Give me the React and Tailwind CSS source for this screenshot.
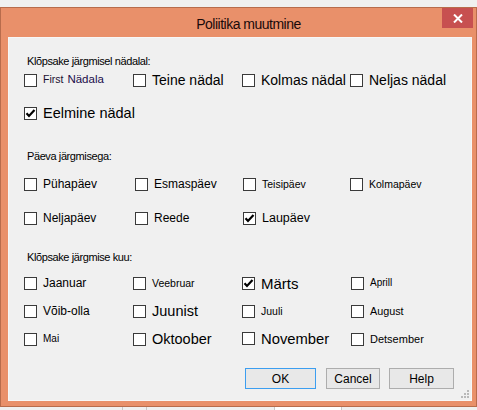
import React from "react";

const font = "font-['Liberation_Sans',Arial,sans-serif]";

function Box({ checked }) {
  return (
    <span className="w-[13px] h-[13px] shrink-0 border border-[#3a3a3a] bg-white flex items-center justify-center">
      {checked && (
        <svg width="11" height="11" viewBox="0 0 11 11">
          <path d="M1.5 5.3 L4 8 L9.5 2" fill="none" stroke="#000" strokeWidth="2.2" />
        </svg>
      )}
    </span>
  );
}

function Check({ label, size, checked, children }) {
  return (
    <div className="flex items-center gap-[6px] whitespace-nowrap">
      <Box checked={checked} />
      {children || <span className={`${size} text-black leading-none`}>{label}</span>}
    </div>
  );
}

function Heading({ children }) {
  return (
    <div className="h-[16px] flex items-center ml-[3px] text-[11px] tracking-[-0.4px] text-black">
      {children}
    </div>
  );
}

export default function App() {
  return (
    <div className={`${font} w-[477px] h-[410px] bg-[#f0f0f0] overflow-hidden`}>
      <div className="h-[7px]" />
      <div className="h-[400px] border border-[#b86c4c] bg-[#e9906a] flex flex-col">
        {/* title bar */}
        <div className="h-[29px] flex items-start relative">
          <div className="flex-1 pl-[20px] pt-[9px] text-center text-[14px] tracking-[-0.5px] text-[#1a0a0a] leading-none">
            Poliitika muutmine
          </div>
          <div className="absolute right-[3px] top-0 w-[31px] h-[20px] bg-[#c75050] flex items-center justify-center">
            <svg width="10" height="9" viewBox="0 0 10 9">
              <path d="M1 0.5 L9 8.5 M9 0.5 L1 8.5" stroke="#fff" strokeWidth="2" />
            </svg>
          </div>
        </div>
        {/* client */}
        <div className="ml-[7px] w-[464px] h-[364px] border border-[#f7f7f7] bg-[#f0f0f0] pl-[15px] pt-[15px] relative flex flex-col">
          <Heading>Klõpsake järgmisel nädalal:</Heading>
          <div className="mt-[1px] h-[20px] grid grid-cols-[109px_109px_109px_1fr] items-center">
            <Check>
              <span className="flex items-baseline gap-[4px] leading-none">
                <span className="text-[10.5px] text-[#1a1030]">First</span>
                <span className="text-[11.5px] text-[#1a0a4a]">Nädala</span>
              </span>
            </Check>
            <Check label="Teine nädal" size="text-[14px]" />
            <Check label="Kolmas nädal" size="text-[14px]" />
            <div className="-ml-[1px]">
              <Check label="Neljas nädal" size="text-[14px]" />
            </div>
          </div>
          <div className="mt-[13px] h-[20px] flex items-center">
            <Check label="Eelmine nädal" size="text-[14.5px]" checked />
          </div>

          <div className="mt-[25px]">
            <Heading>Päeva järgmisega:</Heading>
          </div>
          <div className="mt-[10px] h-[20px] grid grid-cols-[111px_108px_107px_1fr] items-center">
            <Check label="Pühapäev" size="text-[12px]" />
            <Check label="Esmaspäev" size="text-[12px]" />
            <Check label="Teisipäev" size="text-[10.5px]" />
            <Check label="Kolmapäev" size="text-[10.5px]" />
          </div>
          <div className="mt-[14px] h-[20px] grid grid-cols-[111px_108px_107px_1fr] items-center">
            <Check label="Neljapäev" size="text-[12px]" />
            <Check label="Reede" size="text-[12px]" />
            <Check label="Laupäev" size="text-[12.5px]" checked />
          </div>

          <div className="mt-[21px]">
            <Heading>Klõpsake järgmise kuu:</Heading>
          </div>
          <div className="mt-[8px] h-[20px] grid grid-cols-[109px_109px_109px_1fr] items-center">
            <Check label="Jaanuar" size="text-[12px]" />
            <Check label="Veebruar" size="text-[10.5px]" />
            <Check label="Märts" size="text-[15px]" checked />
            <Check label="Aprill" size="text-[10px]" />
          </div>
          <div className="mt-[8px] h-[20px] grid grid-cols-[109px_109px_109px_1fr] items-center">
            <Check label="Võib-olla" size="text-[12px]" />
            <Check label="Juunist" size="text-[14.5px]" />
            <Check label="Juuli" size="text-[10.5px]" />
            <Check label="August" size="text-[10.8px]" />
          </div>
          <div className="mt-[8px] h-[20px] grid grid-cols-[109px_109px_109px_1fr] items-center">
            <Check label="Mai" size="text-[10px]" />
            <Check label="Oktoober" size="text-[14.5px]" />
            <Check label="November" size="text-[14.8px]" />
            <Check label="Detsember" size="text-[11px]" />
          </div>

          <div className="mt-[19px] flex justify-end pr-[17px] gap-[9px] text-[12px] text-black">
            <button className="w-[71px] h-[21px] border border-[#3c9ef0] bg-[#e8e8e8] mr-[1px]">OK</button>
            <button className="w-[54px] h-[21px] border border-[#adadad] bg-[#e8e8e8]">Cancel</button>
            <button className="w-[65px] h-[21px] border border-[#adadad] bg-[#e8e8e8]">Help</button>
          </div>

          <svg className="absolute right-[1px] bottom-[1px]" width="9" height="9" viewBox="0 0 9 9">
            <rect x="6" y="0" width="2" height="2" fill="#b8b8b8" />
            <rect x="3" y="3" width="2" height="2" fill="#b8b8b8" />
            <rect x="6" y="3" width="2" height="2" fill="#b8b8b8" />
            <rect x="0" y="6" width="2" height="2" fill="#b8b8b8" />
            <rect x="3" y="6" width="2" height="2" fill="#b8b8b8" />
            <rect x="6" y="6" width="2" height="2" fill="#b8b8b8" />
          </svg>
        </div>
      </div>
      <div className="h-[3px] flex">
        <div className="w-[122px]" />
        <div className="w-[25px] border-x border-[#c8c8c8]" />
        <div className="w-[127px]" />
        <div className="w-[68px] border-x border-[#c8c8c8] bg-white" />
      </div>
    </div>
  );
}
